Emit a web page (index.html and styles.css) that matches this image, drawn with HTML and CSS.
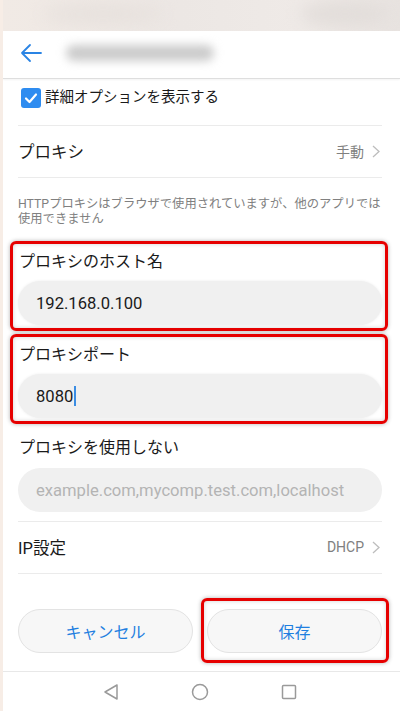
FILE: index.html
```html
<!DOCTYPE html>
<html lang="ja">
<head>
    <meta charset="UTF-8">
    <meta name="viewport" content="width=device-width, initial-scale=1.0">
    <title>プロキシ設定</title>
    <link rel="stylesheet" href="styles.css">
</head>
<body>
    <div class="screen">
        <div class="statusbar">
            <div class="blob blob-a"></div>
            <div class="blob blob-b"></div>
        </div>

        <div class="appbar">
            <svg class="back" width="22" height="22" viewBox="0 0 22 22">
                <path d="M21 11H2 M10 3L2 11L10 19" fill="none" stroke="#2a84e4" stroke-width="1.8" stroke-linecap="round" stroke-linejoin="round"/>
            </svg>
            <div class="title-blur"></div>
        </div>

        <div class="content">
            <div class="row check-row">
                <span class="checkbox">
                    <svg width="20" height="20" viewBox="0 0 20 20">
                        <path d="M5 10.5L8.5 14L15 6.5" fill="none" stroke="#fff" stroke-width="2.2" stroke-linecap="round" stroke-linejoin="round"/>
                    </svg>
                </span>
                <span class="check-label">詳細オプションを表示する</span>
            </div>

            <div class="row item-row">
                <span class="item-title">プロキシ</span>
                <span class="item-value">手動
                    <svg class="chevron" width="8" height="13" viewBox="0 0 8 13">
                        <path d="M1 1L7 6.5L1 12" fill="none" stroke="#bdbdbd" stroke-width="1.3"/>
                    </svg>
                </span>
            </div>

            <p class="note">HTTPプロキシはブラウザで使用されていますが、他のアプリでは使用できません</p>

            <div class="field marked">
                <div class="field-label">プロキシのホスト名</div>
                <div class="input">192.168.0.100</div>
            </div>

            <div class="field marked second">
                <div class="field-label">プロキシポート</div>
                <div class="input">8080<span class="caret"></span></div>
            </div>

            <div class="field plain">
                <div class="field-label">プロキシを使用しない</div>
                <div class="input placeholder">example.com,mycomp.test.com,localhost</div>
            </div>

            <div class="row item-row">
                <span class="item-title">IP設定</span>
                <span class="item-value">DHCP
                    <svg class="chevron" width="8" height="13" viewBox="0 0 8 13">
                        <path d="M1 1L7 6.5L1 12" fill="none" stroke="#bdbdbd" stroke-width="1.3"/>
                    </svg>
                </span>
            </div>

            <div class="actions">
                <button class="btn">キャンセル</button>
                <div class="save-wrap">
                    <button class="btn">保存</button>
                </div>
            </div>
        </div>

        <div class="navbar">
            <svg width="18" height="18" viewBox="0 0 18 18">
                <path d="M15 2V16L3 9Z" fill="none" stroke="#9a9a9a" stroke-width="1.5" stroke-linejoin="round"/>
            </svg>
            <svg width="18" height="18" viewBox="0 0 18 18">
                <circle cx="9" cy="9" r="7.5" fill="none" stroke="#9a9a9a" stroke-width="1.5"/>
            </svg>
            <svg width="18" height="18" viewBox="0 0 18 18">
                <rect x="2.5" y="2.5" width="13" height="13" rx="1" fill="none" stroke="#9a9a9a" stroke-width="1.5"/>
            </svg>
        </div>
    </div>
</body>
</html>
```

FILE: styles.css
```css
body {
    margin: 0;
    padding: 0;
    background-color: #fff;
    font-family: Roboto, "Noto Sans CJK JP", sans-serif;
    color: #1a1a1a;
}
.screen {
    width: 400px;
    height: 711px;
    display: flex;
    flex-direction: column;
    overflow: hidden;
    box-sizing: border-box;
    border-left: 3px solid #f7ede6;
}
.statusbar {
    height: 31px;
    flex-shrink: 0;
    position: relative;
    overflow: hidden;
    background: linear-gradient(to right, #f1eae5, #ece7e4 45%, #efeae7 75%, #e8e3e0);
}
.blob {
    position: absolute;
    border-radius: 50%;
    filter: blur(8px);
}
.blob-a {
    left: 40px;
    top: 4px;
    width: 120px;
    height: 20px;
    background-color: #e7e1dd;
}
.blob-b {
    right: 10px;
    top: 2px;
    width: 90px;
    height: 24px;
    background-color: #e2ddda;
}
.appbar {
    height: 48px;
    flex-shrink: 0;
    box-sizing: border-box;
    display: flex;
    align-items: center;
    padding-left: 17px;
    border-bottom: 1px solid #dedede;
    box-shadow: 0 1px 2px rgba(0, 0, 0, 0.05);
    position: relative;
}
.back {
    margin-top: -4px;
}
.title-blur {
    width: 148px;
    height: 16px;
    margin-left: 24px;
    margin-top: -4px;
    border-radius: 8px;
    background-color: #cbcbcb;
    filter: blur(5px);
}
.content {
    flex: 1;
    padding: 0 18px 0 15px;
}
.row {
    box-sizing: border-box;
    display: flex;
    border-bottom: 1px solid #ebebeb;
}
.check-row {
    height: 47px;
    padding-top: 9px;
    align-items: flex-start;
}
.checkbox {
    width: 20px;
    height: 20px;
    margin-left: 3px;
    border-radius: 3px;
    background-color: #2e8cf0;
    display: flex;
}
.check-label {
    margin-left: 4px;
    font-size: 14.5px;
    line-height: 20px;
}
.item-row {
    height: 52px;
    align-items: center;
    justify-content: space-between;
    padding-bottom: 1px;
}
.item-title {
    font-size: 16.5px;
}
.item-value {
    display: flex;
    align-items: center;
    font-size: 14px;
    color: #808080;
}
.chevron {
    margin-left: 8px;
    margin-right: 2px;
}
.note {
    margin: 0;
    height: 63px;
    box-sizing: border-box;
    padding-top: 19px;
    font-size: 12.3px;
    line-height: 15px;
    color: #808080;
}
.field {
    box-sizing: border-box;
}
.field-label {
    font-size: 16px;
    line-height: 24px;
    padding-left: 1px;
}
.input {
    height: 44px;
    margin-top: 7px;
    border-radius: 22px;
    background-color: #f0f0f0;
    padding-left: 18px;
    display: flex;
    align-items: center;
    font-size: 16.6px;
}
.marked {
    height: 90px;
    margin: 0 -6px 0 -8px;
    padding: 6px 3px 3px 5px;
    border: 3px solid #e60000;
    border-radius: 6px;
    box-shadow: 0 0 4px rgba(0, 0, 0, 0.3), inset 0 0 4px rgba(0, 0, 0, 0.18);
}
.marked .input {
    box-shadow: 0 0 3px rgba(0, 0, 0, 0.08);
}
.second {
    margin-top: 3px;
}
.plain {
    margin-top: 12px;
    padding-bottom: 9px;
    border-bottom: 1px solid #ebebeb;
}
.plain .input {
    margin-top: 8px;
}
.placeholder {
    color: #b4b4b4;
}
.caret {
    display: inline-block;
    width: 2px;
    height: 20px;
    margin-left: 1px;
    background-color: #3b8de3;
}
.actions {
    display: grid;
    grid-template-columns: 1fr 1fr;
    gap: 14px;
    padding: 35px 0 18px 0;
}
.btn {
    width: 100%;
    height: 44px;
    border-radius: 22px;
    border: 1px solid #e3e3e3;
    background-color: #f7f7f7;
    color: #1f7fe0;
    font-family: Roboto, "Noto Sans CJK JP", sans-serif;
    font-size: 16px;
    cursor: pointer;
}
.save-wrap {
    position: relative;
}
.save-wrap::after {
    content: "";
    position: absolute;
    top: -11px;
    bottom: -10px;
    left: -6px;
    right: -7px;
    border: 3px solid #e60000;
    border-radius: 6px;
    box-shadow: 0 0 4px rgba(0, 0, 0, 0.3), inset 0 0 4px rgba(0, 0, 0, 0.18);
}
.navbar {
    height: 40px;
    flex-shrink: 0;
    box-sizing: border-box;
    border-top: 1px solid #e8e8e8;
    display: flex;
    align-items: center;
    justify-content: center;
    gap: 71px;
    padding-right: 3px;
}
```
